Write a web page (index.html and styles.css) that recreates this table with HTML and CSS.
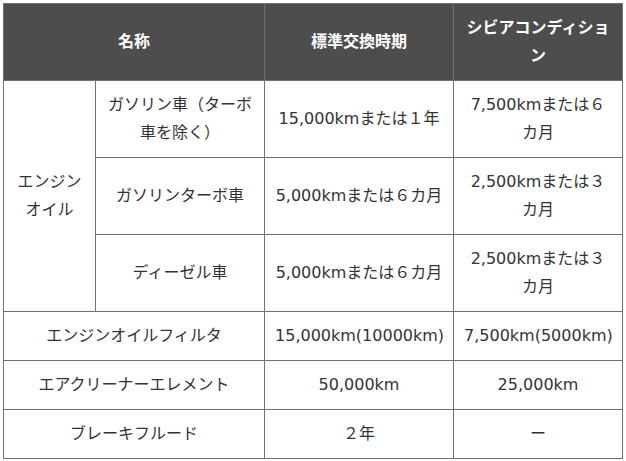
FILE: index.html
```html
<!DOCTYPE html>
<html lang="ja">
<head>
<meta charset="utf-8">
<title>交換時期</title>
<link rel="stylesheet" href="styles.css">
</head>
<body>
<table class="spec">
  <colgroup>
    <col class="c1"><col class="c2"><col class="c3"><col class="c4">
  </colgroup>
  <thead>
    <tr>
      <th colspan="2">名称</th>
      <th>標準交換時期</th>
      <th>シビアコンディション</th>
    </tr>
  </thead>
  <tbody>
    <tr>
      <td rowspan="3">エンジンオイル</td>
      <td>ガソリン車（ターボ車を除く）</td>
      <td>15,000kmまたは１年</td>
      <td>7,500kmまたは６カ月</td>
    </tr>
    <tr>
      <td>ガソリンターボ車</td>
      <td>5,000kmまたは６カ月</td>
      <td>2,500kmまたは３カ月</td>
    </tr>
    <tr>
      <td>ディーゼル車</td>
      <td>5,000kmまたは６カ月</td>
      <td>2,500kmまたは３カ月</td>
    </tr>
    <tr>
      <td colspan="2">エンジンオイルフィルタ</td>
      <td class="nowrap">15,000km(10000km)</td>
      <td class="nowrap">7,500km(5000km)</td>
    </tr>
    <tr>
      <td colspan="2">エアクリーナーエレメント</td>
      <td>50,000km</td>
      <td>25,000km</td>
    </tr>
    <tr>
      <td colspan="2">ブレーキフルード</td>
      <td>２年</td>
      <td>ー</td>
    </tr>
  </tbody>
</table>
</body>
</html>
```
FILE: styles.css
```css
html, body {
  margin: 0;
  padding: 0;
  background: #ffffff;
}
body {
  padding: 3px;
  font-family: "DejaVu Sans", "Noto Sans CJK JP", sans-serif;
  font-size: 16px;
  color: #333333;
}
.spec {
  border-collapse: collapse;
  table-layout: fixed;
  width: 619px;
}
.c1 { width: 92px; }
.c2 { width: 169px; }
.c3 { width: 189px; }
.c4 { width: 169px; }
.spec th,
.spec td {
  border: 1px solid #707070;
  padding: 10px 10px;
  line-height: 28px;
  text-align: center;
  vertical-align: middle;
  font-weight: normal;
}
.spec th {
  background: #4d4d4d;
  color: #ffffff;
  font-weight: bold;
}
.nowrap {
  white-space: nowrap;
}
```
